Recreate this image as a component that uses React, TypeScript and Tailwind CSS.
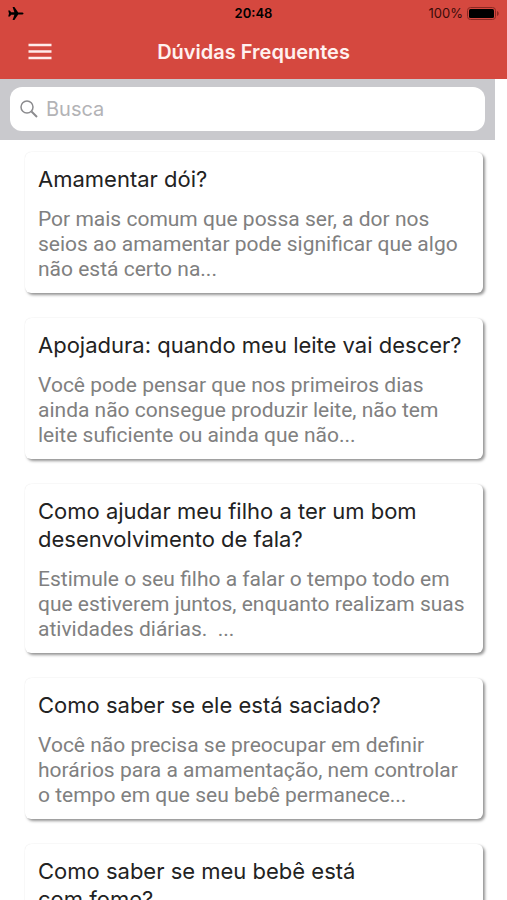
const questions = [
  {
    title: ["Amamentar dói?"],
    lines: ["Por mais comum que possa ser, a dor nos", "seios ao amamentar pode significar que algo", "não está certo na..."],
  },
  {
    title: ["Apojadura: quando meu leite vai descer?"],
    lines: ["Você pode pensar que nos primeiros dias", "ainda não consegue produzir leite, não tem", "leite suficiente ou ainda que não..."],
  },
  {
    title: ["Como ajudar meu filho a ter um bom", "desenvolvimento de fala?"],
    lines: ["Estimule o seu filho a falar o tempo todo em", "que estiverem juntos, enquanto realizam suas", "atividades diárias.\u00a0 ..."],
  },
  {
    title: ["Como saber se ele está saciado?"],
    lines: ["Você não precisa se preocupar em definir", "horários para a amamentação, nem controlar", "o tempo em que seu bebê permanece..."],
  },
  {
    title: ["Como saber se meu bebê está", "com fome?"],
    lines: [],
  },
];

function Lines({ lines }: { lines: string[] }) {
  return lines.map((line) => (
    <span key={line} className="block whitespace-nowrap">
      {line}
    </span>
  ));
}

function StatusBar() {
  return (
    <div className="grid h-7 grid-cols-3 items-center pr-2 pl-2 text-[13px] text-black">
      <svg className="h-4 w-4" viewBox="0 0 16 16" aria-label="Modo avião">
        <path
          d="M15.500 7.500c0 .7-.8 1-1.800 1H10.200L6.400 14H4.600L6.400 8.700H3.200L1.800 10.500H.2l.8-3-.8-3h1.600L3.200 6.300h3.200L4.600 1H6.400L10.200 6.500h3.500c1 0 1.800.3 1.800 1z"
          fill="currentColor"
        />
      </svg>
      <span className="text-center font-semibold">20:48</span>
      <div className="flex items-center justify-end gap-1 text-[#3a0c09]">
        <span>100%</span>
        <svg className="h-3.5 w-8" viewBox="0 0 32 14" aria-label="Bateria">
          <rect x="0.500" y="0.500" width="28" height="12" rx="3" fill="none" stroke="#8b2822" />
          <rect x="2" y="2" width="25" height="9" rx="1.500" fill="#000" />
          <path d="M30 4c1.300.4 1.700 1.400 1.700 2.500s-.4 2.100-1.700 2.500z" fill="#8b2822" />
        </svg>
      </div>
    </div>
  );
}

export default function App() {
  return (
    <div className="h-screen overflow-hidden bg-white font-['Inter','Liberation_Sans',sans-serif]">
      <header className="bg-[#d5483f]">
        <StatusBar />
        <div className="grid h-[51px] grid-cols-[40px_1fr_40px] items-center px-5 pb-1">
          <button type="button" aria-label="Abrir menu" className="flex h-10 w-10 items-center justify-center text-[#ffeceb]">
            <svg className="h-5 w-6" viewBox="0 0 24 20">
              <path d="M0.500 3h23M0.500 9.500h23M0.500 16h23" stroke="currentColor" strokeWidth="2.500" />
            </svg>
          </button>
          <h1 className="text-center text-xl font-semibold text-[#fff1ef]">Dúvidas Frequentes</h1>
        </div>
      </header>
      <form className="mr-3 bg-[#c9c9cd] px-[10px] pt-2 pb-[9px]" role="search">
        <label className="flex h-11 items-center gap-2 rounded-xl bg-white pl-[10px]">
          <svg className="h-[18px] w-[18px] shrink-0" viewBox="0 0 18 18" fill="none" stroke="#8b8b8e" aria-hidden="true">
            <circle cx="7" cy="7" r="6" strokeWidth="1.500" />
            <path d="M11.500 11.500l5.500 5.500" strokeWidth="2" />
          </svg>
          <input
            type="text"
            aria-label="Busca"
            placeholder="Busca"
            className="min-w-0 flex-1 bg-transparent text-xl text-[#222222] outline-none placeholder:text-[#b3b3b6]"
          />
        </label>
      </form>
      <main className="flex flex-col gap-[25px] pt-3 pr-6 pl-[25px]">
        {questions.map((question) => (
          <article
            key={question.title[0]}
            className="rounded-md bg-white px-[13px] pt-[13px] pb-[11px] shadow-[2px_2px_3px_rgba(0,0,0,0.42),0_0_1px_rgba(0,0,0,0.12)]"
          >
            <h2 className="text-[22px] leading-7 text-[#222222]">
              <Lines lines={question.title} />
            </h2>
            <p className="mt-[14px] font-['Roboto','Inter',sans-serif] text-[21px] leading-[25px] text-[#808080]">
              <Lines lines={question.lines} />
            </p>
          </article>
        ))}
      </main>
    </div>
  );
}
